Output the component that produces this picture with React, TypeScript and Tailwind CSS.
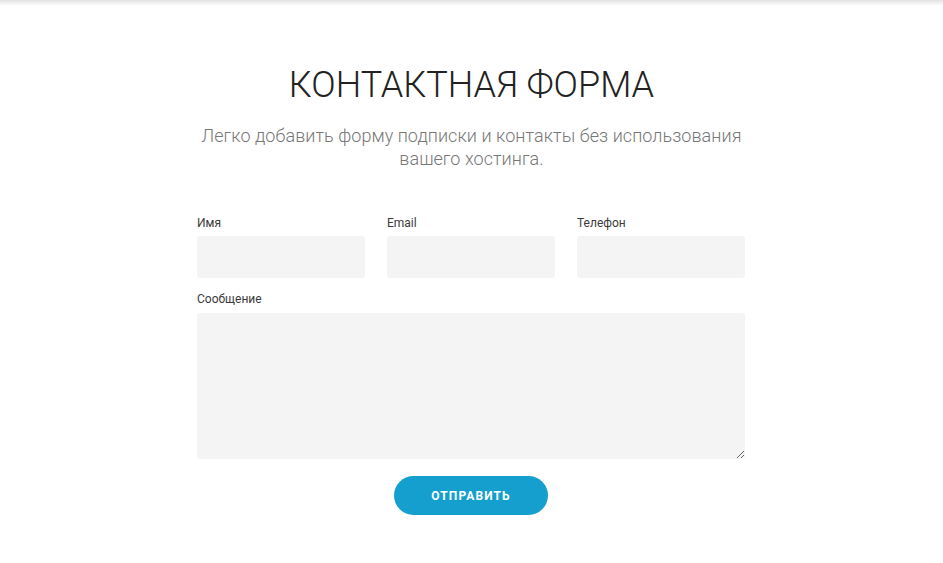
import React from "react";

export default function App() {
  const font = { fontFamily: "Roboto, 'Noto Sans', sans-serif" };
  return (
    <div className="relative w-full min-h-[563px] bg-white" style={font}>
      <div className="absolute top-0 left-0 right-0 h-[6px] bg-gradient-to-b from-[#e2e2e2] to-white" />
      <div className="flex flex-col items-center pt-[63px]">
        <h1 className="text-[36px] leading-[44px] font-light text-[#222] tracking-[0px]">
          КОНТАКТНАЯ ФОРМА
        </h1>
        <p className="mt-[17px] w-[560px] text-center text-[18px] leading-[23px] font-light text-[#777] tracking-[0.05px]">
          Легко добавить форму подписки и контакты без использования вашего хостинга.
        </p>
        <form className="mt-[45px] mr-[1px] w-[548px] flex flex-col" onSubmit={(e) => e.preventDefault()}>
          <div className="grid grid-cols-3 gap-x-[22px]">
            {["Имя", "Email", "Телефон"].map((l) => (
              <div key={l} className="flex flex-col">
                <label className="text-[12px] leading-[16px] text-[#3a3a3a]">{l}</label>
                <input className="mt-[5px] h-[42px] rounded-[3px] bg-[#f4f4f4] outline-none" />
              </div>
            ))}
          </div>
          <label className="mt-[13px] text-[12px] leading-[16px] text-[#3a3a3a]">Сообщение</label>
          <textarea className="mt-[6px] h-[146px] rounded-[3px] bg-[#f4f4f4] outline-none" />
          <div className="flex justify-center mt-[17px]">
            <button
              type="submit"
              className="w-[154px] h-[39px] rounded-full bg-[#149fcf] text-white text-[12px] font-bold tracking-[1.1px]"
            >
              ОТПРАВИТЬ
            </button>
          </div>
        </form>
      </div>
    </div>
  );
}
